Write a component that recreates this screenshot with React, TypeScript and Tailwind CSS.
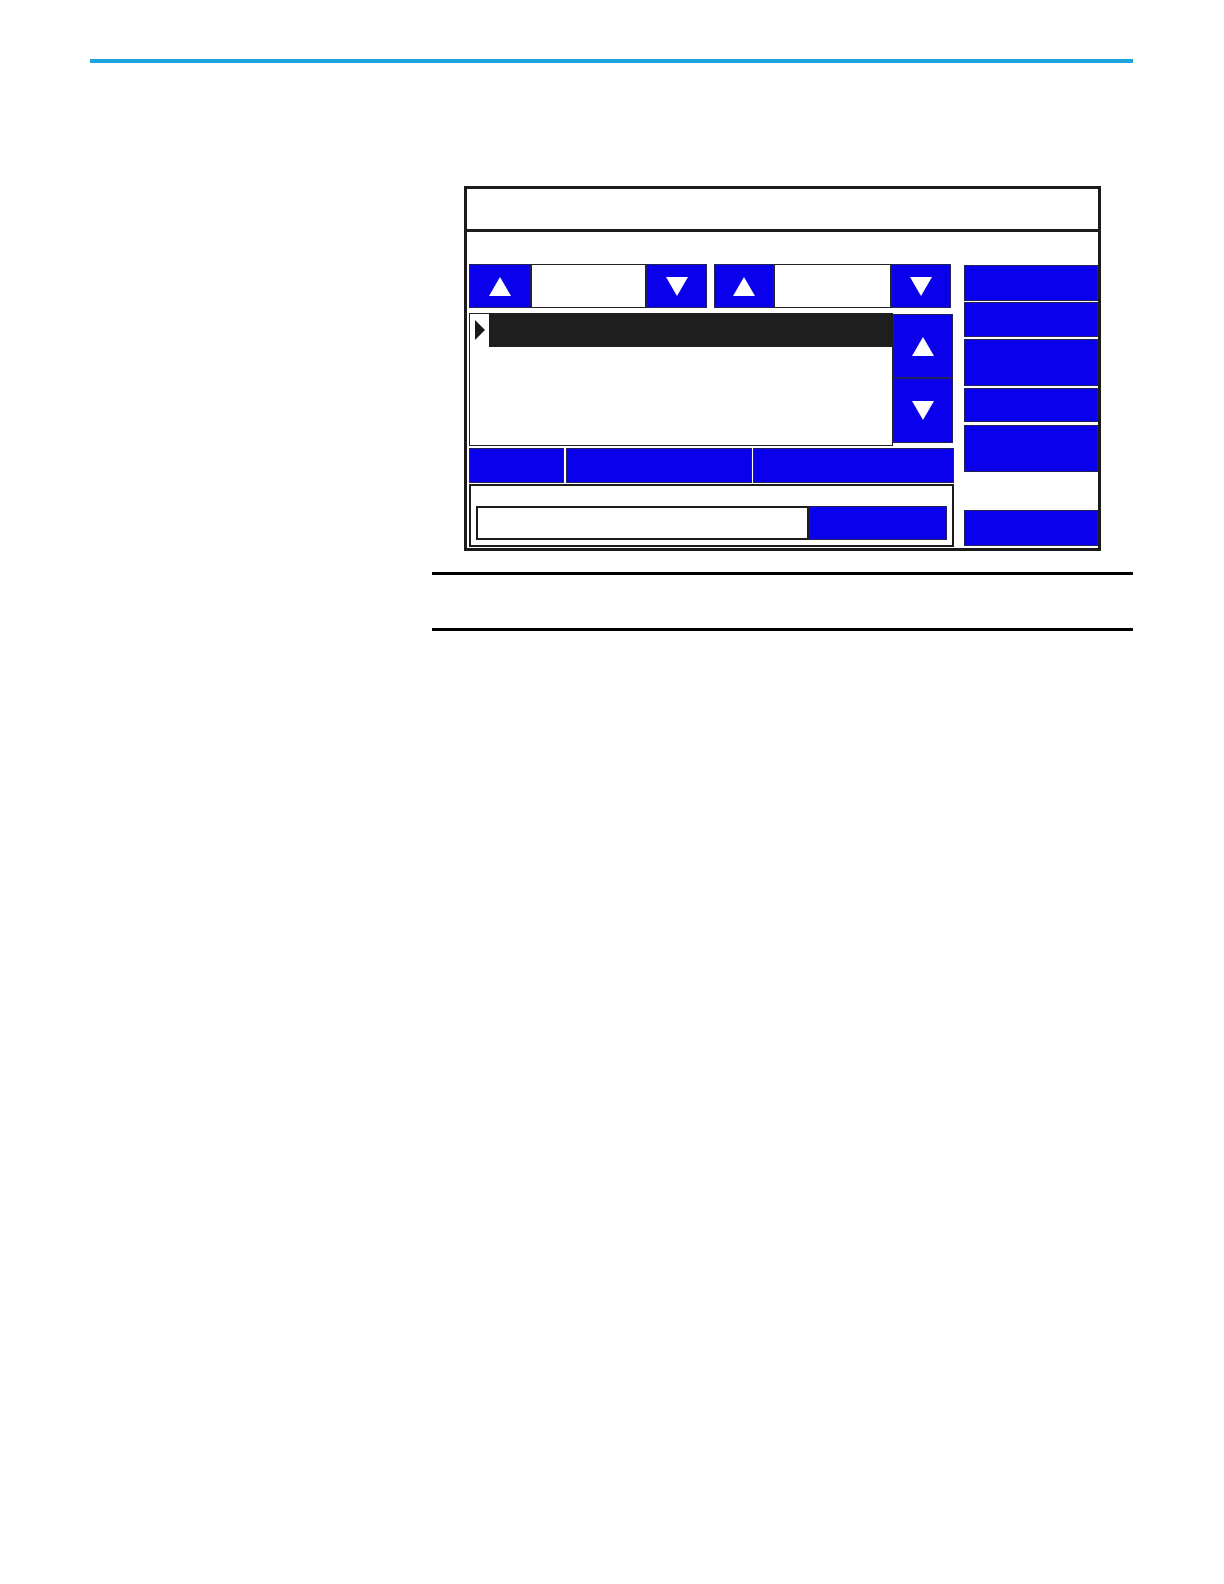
import React from "react";

const blueBtn = "bg-[#0a00ec] border border-[#23235a] flex items-center justify-center";

function Up() {
    return (
        <svg width="22" height="19" viewBox="0 0 22 19">
            <polygon points="11,0 22,19 0,19" fill="#ffffff" />
        </svg>
    );
}

function Down() {
    return (
        <svg width="22" height="19" viewBox="0 0 22 19">
            <polygon points="0,0 22,0 11,19" fill="#ffffff" />
        </svg>
    );
}

function Spinner({ up, input, down }: { up: string; input: string; down: string }) {
    return (
        <div className="flex h-[44px]">
            <div className={`${blueBtn} ${up} h-full`}>
                <Up />
            </div>
            <div className={`${input} h-full bg-white border border-[#222]`} />
            <div className={`${blueBtn} ${down} h-full`}>
                <Down />
            </div>
        </div>
    );
}

export default function App() {
    return (
        <div className="w-[1224px] h-[1584px] bg-white overflow-hidden font-['Liberation_Sans',sans-serif]">
            {/* top rule */}
            <div className="ml-[90px] mt-[59px] w-[1043px] h-[4px] bg-[#1ba4dc]" />

            {/* HMI screen frame */}
            <div className="ml-[464px] mt-[123px] w-[637px] h-[365px] border-[3px] border-[#1c1c1c] flex flex-col">
                <div className="h-[43px] border-b-[3px] border-[#1c1c1c]" />

                <div className="flex flex-1 pl-[2px]">
                    {/* left column */}
                    <div className="w-[485px] flex flex-col pt-[32px]">
                        <div className="flex gap-[7px]">
                            <Spinner up="w-[62px]" input="w-[115px]" down="w-[61px]" />
                            <Spinner up="w-[60px]" input="w-[117px]" down="w-[60px]" />
                        </div>

                        <div className="flex mt-[5px] h-[133px]">
                            <div className="w-[424px] h-full border border-[#222] flex flex-col">
                                <div className="flex h-[34px] -mt-px">
                                    <div className="w-[19px] flex items-center justify-center">
                                        <svg width="10" height="20" viewBox="0 0 10 20">
                                            <polygon points="0,0 10,10 0,20" fill="#1a1a1a" />
                                        </svg>
                                    </div>
                                    <div className="flex-1 bg-[#1e1e1e] -mr-px" />
                                </div>
                            </div>
                            <div className="w-[60px] flex flex-col pt-px pb-[3px]">
                                <div className={`${blueBtn} h-[64px]`}>
                                    <Up />
                                </div>
                                <div className={`${blueBtn} flex-1`}>
                                    <Down />
                                </div>
                            </div>
                        </div>

                        <div className="flex mt-[2px] h-[35px]">
                            <div className={`${blueBtn} w-[95px]`} />
                            <div className={`${blueBtn} w-[186px] ml-[2px]`} />
                            <div className={`${blueBtn} flex-1 ml-px`} />
                        </div>

                        <div className="mt-px h-[63px] border-2 border-[#1c1c1c] flex items-end pb-[5px] px-[5px]">
                            <div className="flex w-full h-[34px]">
                                <div className="w-[333px] h-full bg-white border-2 border-[#1c1c1c]" />
                                <div className={`${blueBtn} flex-1`} />
                            </div>
                        </div>
                    </div>

                    {/* right column */}
                    <div className="ml-[10px] flex-1 flex flex-col pt-[33px]">
                        <div className={`${blueBtn} h-[36px]`} />
                        <div className={`${blueBtn} h-[35px] mt-px`} />
                        <div className={`${blueBtn} h-[47px] mt-[2px]`} />
                        <div className={`${blueBtn} h-[34px] mt-[2px]`} />
                        <div className={`${blueBtn} h-[47px] mt-[3px]`} />
                        <div className={`${blueBtn} h-[36px] mt-[38px]`} />
                    </div>
                </div>
            </div>

            {/* note rules */}
            <div className="ml-[432px] mt-[21px] w-[701px] h-[3px] bg-black" />
            <div className="ml-[432px] mt-[53px] w-[701px] h-[3px] bg-black" />
        </div>
    );
}
